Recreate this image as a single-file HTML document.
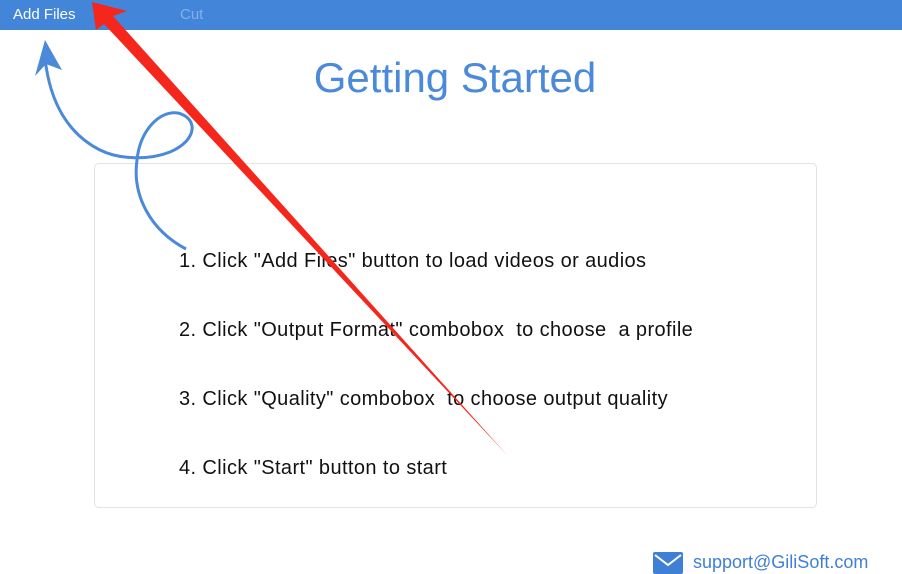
<!DOCTYPE html>
<html><head><meta charset="utf-8"><style>
*{margin:0;padding:0;box-sizing:border-box}
body{width:902px;height:574px;background:#fff;position:relative;overflow:hidden;font-family:"Liberation Sans",sans-serif}
.bar{position:absolute;left:0;top:0;width:902px;height:30px;background:#4285d9}
.bar span{position:absolute;top:6px;font-size:15px}
.title{position:absolute;left:0;width:910px;top:54px;text-align:center;font-size:42px;color:#4a8ad8}
.box{position:absolute;left:94px;top:163px;width:723px;height:345px;border:1px solid #e2e2e2;border-radius:5px}
.line{position:absolute;left:179px;font-size:20px;color:#111;white-space:pre;letter-spacing:0.4px}
.mail{position:absolute;left:693px;top:552px;font-size:18px;color:#3f7fd6}
</style></head><body>
<div class="bar"><span style="left:13px;color:#fff">Add Files</span><span style="left:180px;color:#86b0e6">Cut</span></div>
<div class="title">Getting Started</div>
<div class="box"></div>
<div class="line" style="top:250px">1. Click "Add Files" button to load videos or audios</div>
<div class="line" style="top:319px">2. Click "Output Format" combobox  to choose  a profile</div>
<div class="line" style="top:388px">3. Click "Quality" combobox  to choose output quality</div>
<div class="line" style="top:457px">4. Click "Start" button to start</div>
<svg style="position:absolute;left:653px;top:552px" width="30" height="22"><rect x="0" y="0" width="30" height="22" rx="2" fill="#3f7fd6"/><path d="M2 3 L15 13 L28 3" stroke="#fff" stroke-width="2" fill="none"/></svg>
<div class="mail">support@GiliSoft.com</div>
<svg style="position:absolute;left:0;top:0" width="902" height="574">
<path d="M186 249 C150 230 132 195 137 160 C140 130 160 110 178 113 C198 118 198 140 170 152 C150 160 120 160 100 150 C70 135 50 105 45 58" stroke="#4a8ad8" stroke-width="3" fill="none"/>
<path d="M45 40 L35 76 L46 64 L62 70 Z" fill="#4a8ad8"/>
<polygon points="92,2 127,11 113,16 507,455 104,24 96,30" fill="#f5261c"/>
</svg>
</body></html>
